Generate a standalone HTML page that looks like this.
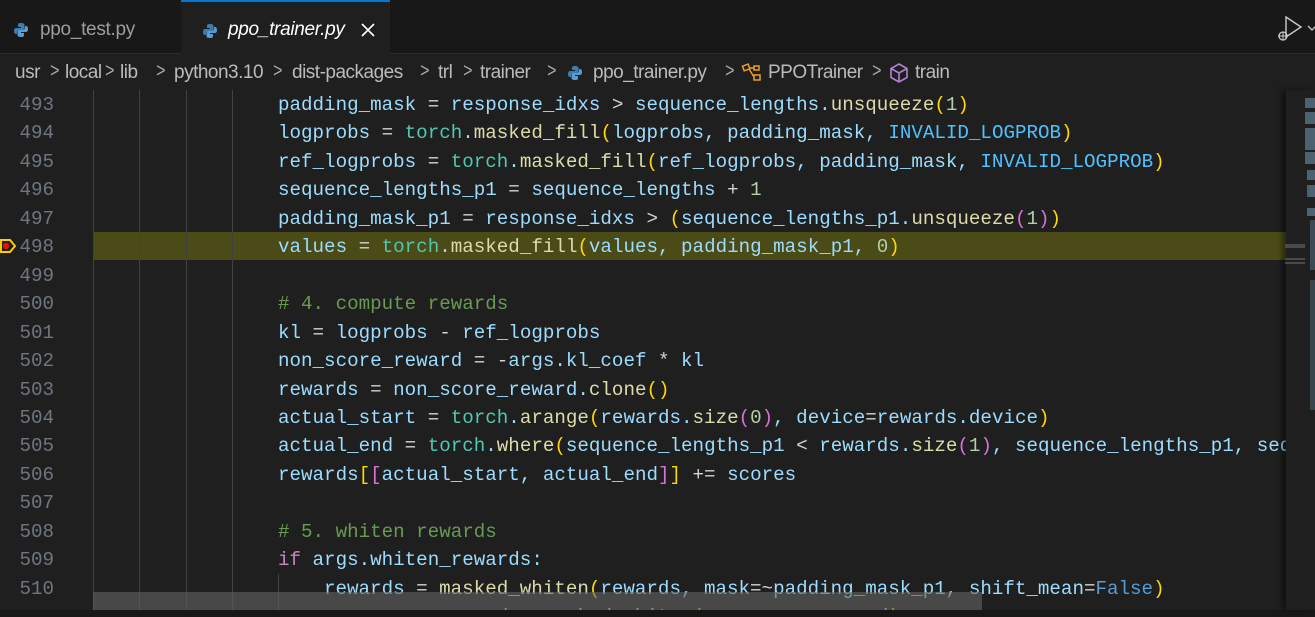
<!DOCTYPE html>
<html style="overflow:hidden;width:1315px;height:617px"><head><meta charset="utf-8"><style>
*{margin:0;padding:0;box-sizing:border-box}
body{width:1315px;height:617px;overflow:hidden;background:#1f1f1f;position:relative;font-family:"Liberation Sans",sans-serif}
.tabs{position:absolute;left:0;top:0;width:1315px;height:54px;background:#181818;border-bottom:1px solid #2b2b2b}
.tab{position:absolute;top:0;height:54px;font-size:19px;color:#9d9d9d;line-height:60px;letter-spacing:-0.3px}
.act{left:181px;width:209px;background:#1f1f1f;border-top:2px solid #0078d4;height:55px;color:#fff;font-style:italic}
.py{position:absolute;width:16px;height:16px}
.bc{position:absolute;left:0;top:54px;width:1315px;height:36px;background:#1f1f1f;font-size:19px;color:#bbb;letter-spacing:-0.5px}
.bc span{position:absolute;top:8px}
.bc .s{font-size:20px;top:6px;color:#aaa;transform:scaleX(.8)}
.code{position:absolute;left:0;top:90px;width:1286px;height:520px;overflow:hidden;font-family:"Liberation Mono",monospace;font-size:19.2px}
.ln{position:absolute;left:0;width:54px;text-align:right;color:#6e7681;height:28.45px;line-height:30px}
.l{position:absolute;left:278px;white-space:pre;color:#9cdcfe;height:28.45px;line-height:30px}
.g{position:absolute;top:0;width:1px;height:530px;background:#404040}
.f{color:#dcdcaa}.t{color:#4ec9b0}.c{color:#4fc1ff}.o{color:#d4d4d4}.n{color:#b5cea8}.y{color:#ffd700}.m{color:#da70d6}.b{color:#179fff}.k{color:#c586c0}.cm{color:#6a9955}.kw{color:#569cd6}
.mm{position:absolute;left:1286px;top:90px;width:29px;height:520px;background:#1f1f1f;box-shadow:-4px 0 5px rgba(0,0,0,.45)}
.mb{position:absolute;background:#5f7f93;opacity:.7}
</style></head><body>
<div class="tabs">
 <div class="tab" style="left:0;width:181px">
  <svg class="py" style="left:13px;top:22px" viewBox="0 0 16 16"><path d="M8 1C5 1 5 2 5 3v2h3v1H3C1.5 6 1 7.5 1 9s.5 3 2 3h1v-2c0-1 1-2 2-2h4c1 0 1.5-.5 1.5-1.5V3C11.5 1.5 10 1 8 1z" fill="#3e7bb0"/><path d="M8 15c3 0 3-1 3-2v-2H8v-1h5c1.5 0 2-1.5 2-3s-.5-3-2-3h-1v2c0 1-1 2-2 2H6c-1 0-1.5.5-1.5 1.5V13c0 1.5 1.5 2 3.5 2z" fill="#5a9bd0"/></svg>
  <span style="position:absolute;left:40px">ppo_test.py</span></div>
 <div class="tab act">
  <svg class="py" style="left:21px;top:21px" viewBox="0 0 16 16"><path d="M8 1C5 1 5 2 5 3v2h3v1H3C1.5 6 1 7.5 1 9s.5 3 2 3h1v-2c0-1 1-2 2-2h4c1 0 1.5-.5 1.5-1.5V3C11.5 1.5 10 1 8 1z" fill="#3e7bb0"/><path d="M8 15c3 0 3-1 3-2v-2H8v-1h5c1.5 0 2-1.5 2-3s-.5-3-2-3h-1v2c0 1-1 2-2 2H6c-1 0-1.5.5-1.5 1.5V13c0 1.5 1.5 2 3.5 2z" fill="#5a9bd0"/></svg>
  <span style="position:absolute;left:47px;top:-2px">ppo_trainer.py</span>
  <svg style="position:absolute;left:180px;top:21px" width="14" height="14" viewBox="0 0 14 14"><path d="M1 1L13 13M13 1L1 13" stroke="#fff" stroke-width="1.6"/></svg></div>
 <svg style="position:absolute;left:1276px;top:16px" width="39" height="26" viewBox="0 0 39 26"><path d="M10 1L25 11L10 21Z" fill="none" stroke="#ccc" stroke-width="1.4"/><circle cx="7" cy="20" r="4" fill="none" stroke="#ccc" stroke-width="1.3"/><path d="M2 20h10M7 16v8" stroke="#ccc"/><path d="M32 10l4 4 4-4" fill="none" stroke="#ccc" stroke-width="1.3"/></svg>
</div>
<div class="bc">
 <span style="left:15px">usr</span><span class="s" style="left:49px">&gt;</span><span style="left:65px">local</span><span class="s" style="left:104px">&gt;</span><span style="left:120px">lib</span><span class="s" style="left:155px">&gt;</span><span style="left:174px">python3.10</span><span class="s" style="left:272px">&gt;</span><span style="left:292px">dist-packages</span><span class="s" style="left:419px">&gt;</span><span style="left:438px">trl</span><span class="s" style="left:462px">&gt;</span><span style="left:480px">trainer</span><span class="s" style="left:546px">&gt;</span>
 <svg class="py" style="left:567px;top:11px" viewBox="0 0 16 16"><path d="M8 1C5 1 5 2 5 3v2h3v1H3C1.5 6 1 7.5 1 9s.5 3 2 3h1v-2c0-1 1-2 2-2h4c1 0 1.5-.5 1.5-1.5V3C11.5 1.5 10 1 8 1z" fill="#3e7bb0"/><path d="M8 15c3 0 3-1 3-2v-2H8v-1h5c1.5 0 2-1.5 2-3s-.5-3-2-3h-1v2c0 1-1 2-2 2H6c-1 0-1.5.5-1.5 1.5V13c0 1.5 1.5 2 3.5 2z" fill="#5a9bd0"/></svg>
 <span style="left:593px">ppo_trainer.py</span><span class="s" style="left:724px">&gt;</span>
 <svg style="position:absolute;left:741px;top:9px" width="22" height="20" viewBox="0 0 22 20"><rect x="2" y="2" width="6" height="5" fill="none" stroke="#ee9d28" stroke-width="1.5" transform="rotate(-20 5 4)"/><rect x="13" y="12" width="6" height="5" fill="none" stroke="#ee9d28" stroke-width="1.5"/><rect x="13" y="3" width="5" height="4" fill="none" stroke="#ee9d28" stroke-width="1.5"/><path d="M8 6L13 14M8 5h5" stroke="#ee9d28" stroke-width="1.5"/></svg>
 <span style="left:768px">PPOTrainer</span><span class="s" style="left:871px">&gt;</span>
 <svg style="position:absolute;left:889px;top:8px" width="20" height="22" viewBox="0 0 20 22"><path d="M10 2L18 6.5V15.5L10 20L2 15.5V6.5Z M2 6.5L10 11L18 6.5 M10 11V20" fill="none" stroke="#b180d7" stroke-width="1.6"/></svg>
 <span style="left:915px">train</span>
</div>
<div class="code">
 <div style="position:absolute;left:93px;top:142px;width:1193px;height:28.45px;background:#4b4b18"></div>
 <div class="g" style="left:93px"></div><div class="g" style="left:139px"></div><div class="g" style="left:186px"></div><div class="g" style="left:232px"></div><div class="g" style="left:278px;top:484px;height:50px"></div>
 <svg style="position:absolute;left:0;top:147px" width="16" height="18" viewBox="0 0 16 18"><path d="M1 3H10L15 9L10 15H1Z" fill="none" stroke="#ffcc00" stroke-width="2"/><circle cx="6" cy="9" r="3.2" fill="#e51400"/></svg>
 <div class="ln" style="top:0">493</div><div class="ln" style="top:28.45px">494</div><div class="ln" style="top:56.9px">495</div><div class="ln" style="top:85.35px">496</div><div class="ln" style="top:113.8px">497</div><div class="ln" style="top:142.25px">498</div><div class="ln" style="top:170.7px">499</div><div class="ln" style="top:199.15px">500</div><div class="ln" style="top:227.6px">501</div><div class="ln" style="top:256.05px">502</div><div class="ln" style="top:284.5px">503</div><div class="ln" style="top:312.95px">504</div><div class="ln" style="top:341.4px">505</div><div class="ln" style="top:369.85px">506</div><div class="ln" style="top:398.3px">507</div><div class="ln" style="top:426.75px">508</div><div class="ln" style="top:455.2px">509</div><div class="ln" style="top:483.65px">510</div>
 <div class="l" style="top:0">padding_mask <span class="o">=</span> response_idxs <span class="o">&gt;</span> sequence_lengths.<span class="f">unsqueeze</span><span class="y">(</span><span class="n">1</span><span class="y">)</span></div>
 <div class="l" style="top:28.45px">logprobs <span class="o">=</span> <span class="t">torch</span>.<span class="f">masked_fill</span><span class="y">(</span>logprobs, padding_mask, <span class="c">INVALID_LOGPROB</span><span class="y">)</span></div>
 <div class="l" style="top:56.9px">ref_logprobs <span class="o">=</span> <span class="t">torch</span>.<span class="f">masked_fill</span><span class="y">(</span>ref_logprobs, padding_mask, <span class="c">INVALID_LOGPROB</span><span class="y">)</span></div>
 <div class="l" style="top:85.35px">sequence_lengths_p1 <span class="o">=</span> sequence_lengths <span class="o">+</span> <span class="n">1</span></div>
 <div class="l" style="top:113.8px">padding_mask_p1 <span class="o">=</span> response_idxs <span class="o">&gt;</span> <span class="y">(</span>sequence_lengths_p1.<span class="f">unsqueeze</span><span class="m">(</span><span class="n">1</span><span class="m">)</span><span class="y">)</span></div>
 <div class="l" style="top:142.25px">values <span class="o">=</span> <span class="t">torch</span>.<span class="f">masked_fill</span><span class="y">(</span>values, padding_mask_p1, <span class="n">0</span><span class="y">)</span></div>
 <div class="l cm" style="top:199.15px"># 4. compute rewards</div>
 <div class="l" style="top:227.6px">kl <span class="o">=</span> logprobs <span class="o">-</span> ref_logprobs</div>
 <div class="l" style="top:256.05px">non_score_reward <span class="o">= -</span>args.kl_coef <span class="o">*</span> kl</div>
 <div class="l" style="top:284.5px">rewards <span class="o">=</span> non_score_reward.<span class="f">clone</span><span class="y">()</span></div>
 <div class="l" style="top:312.95px">actual_start <span class="o">=</span> <span class="t">torch</span>.<span class="f">arange</span><span class="y">(</span>rewards.<span class="f">size</span><span class="m">(</span><span class="n">0</span><span class="m">)</span>, device<span class="o">=</span>rewards.device<span class="y">)</span></div>
 <div class="l" style="top:341.4px">actual_end <span class="o">=</span> <span class="t">torch</span>.<span class="f">where</span><span class="y">(</span>sequence_lengths_p1 <span class="o">&lt;</span> rewards.<span class="f">size</span><span class="m">(</span><span class="n">1</span><span class="m">)</span>, sequence_lengths_p1, seq</div>
 <div class="l" style="top:369.85px">rewards<span class="y">[</span><span class="m">[</span>actual_start, actual_end<span class="m">]</span><span class="y">]</span> <span class="o">+=</span> scores</div>
 <div class="l cm" style="top:426.75px"># 5. whiten rewards</div>
 <div class="l" style="top:455.2px"><span class="k">if</span> args.whiten_rewards:</div>
 <div class="l" style="top:483.65px;left:324px">rewards <span class="o">=</span> <span class="f">masked_whiten</span><span class="y">(</span>rewards, mask<span class="o">=~</span>padding_mask_p1, shift_mean<span class="o">=</span><span class="kw">False</span><span class="y">)</span></div>
 <div class="l" style="top:512.1px;left:324px">non_score_reward <span class="o">=</span> <span class="f">masked_whiten</span><span class="y">(</span>non_score_reward<span class="y">)</span></div>
</div>
<div style="position:absolute;left:93px;top:592px;width:889px;height:18px;background:rgba(100,100,100,.6)"></div>
<div style="position:absolute;left:0;top:610px;width:1315px;height:7px;background:#181818"></div>
<div class="mm">
 <div class="mb" style="left:19px;top:8px;width:10px;height:10px"></div>
 <div class="mb" style="left:19px;top:22px;width:10px;height:12px"></div>
 <div class="mb" style="left:19px;top:38px;width:10px;height:22px"></div>
 <div class="mb" style="left:19px;top:62px;width:10px;height:12px"></div>
 <div class="mb" style="left:21px;top:80px;width:8px;height:10px"></div>
 <div class="mb" style="left:21px;top:95px;width:8px;height:12px"></div>
 <div class="mb" style="left:21px;top:118px;width:8px;height:8px"></div>
 <div class="mb" style="left:24px;top:130px;width:5px;height:50px;opacity:.45"></div>
 <div style="position:absolute;left:-1px;top:154px;width:20px;height:4px;background:#4a4a4a"></div>
 <div style="position:absolute;left:-1px;top:168px;width:20px;height:2px;background:#4a4a4a"></div>
 <div style="position:absolute;left:-1px;top:172px;width:20px;height:2px;background:#4a4a4a"></div>
 <div class="mb" style="left:24px;top:190px;width:5px;height:130px;opacity:.4"></div>
</div>
</body></html>
